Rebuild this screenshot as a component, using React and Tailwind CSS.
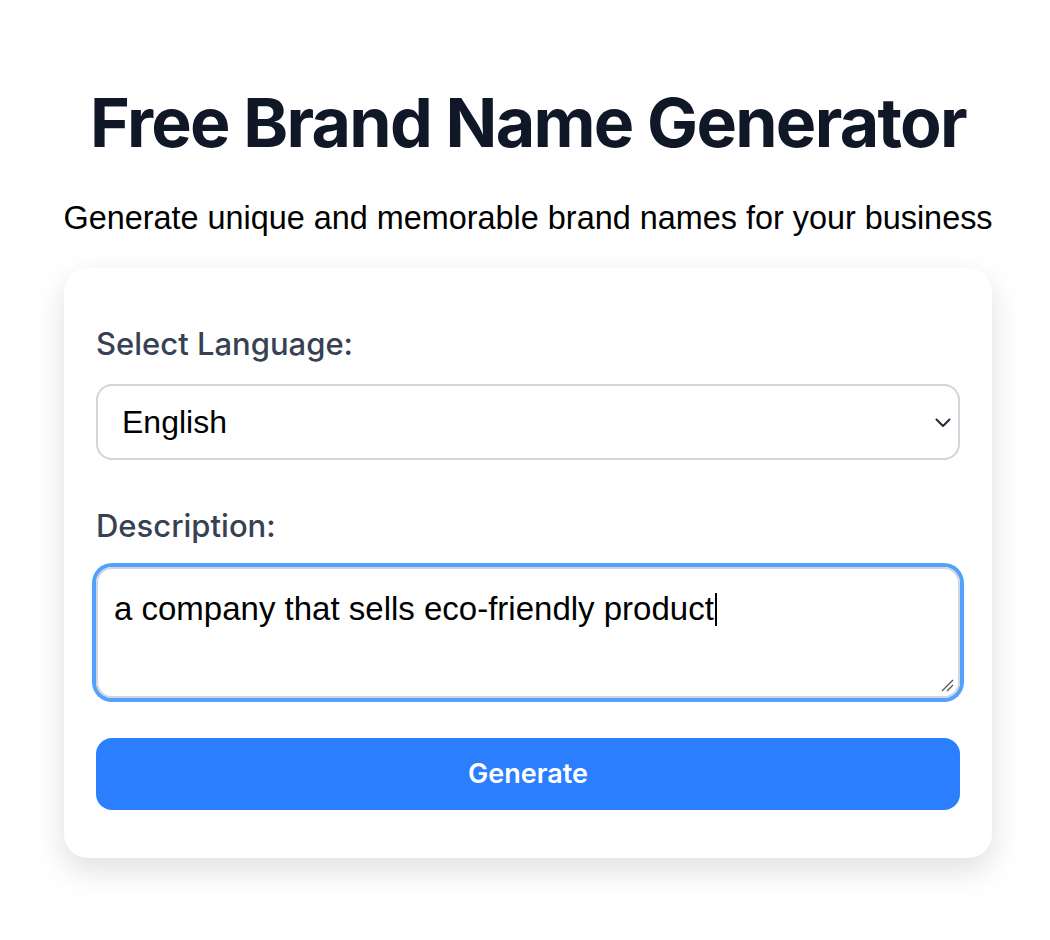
import React, { useState } from "react";

function ChevronDown() {
  return (
    <svg width="16" height="10" viewBox="0 0 16 10" fill="none" className="pointer-events-none">
      <path d="M1.5 1.5 L8 8 L14.5 1.5" stroke="#1f2937" strokeWidth="2" strokeLinecap="round" strokeLinejoin="round" />
    </svg>
  );
}

function ResizeGrip() {
  return (
    <svg width="14" height="14" viewBox="0 0 14 14" fill="none">
      <path d="M13 2 L2 13" stroke="#555" strokeWidth="1.2" />
      <path d="M13 7 L7 13" stroke="#555" strokeWidth="1.2" />
    </svg>
  );
}

export default function App() {
  const [language, setLanguage] = useState("English");
  const description = "a company that sells eco-friendly product";

  return (
    <div className="min-h-screen bg-white font-['Liberation_Sans',Arial,sans-serif]">
      <div className="ml-[64px] w-[928px] pt-[82px]">
        <h1 className="text-center font-['Inter',sans-serif] text-[68px] leading-[80px] font-bold tracking-[-0.025em] text-gray-900">
          Free Brand Name Generator
        </h1>
        <p className="-mx-[20px] mt-[36px] whitespace-nowrap text-center text-[32.4px] leading-[40px] text-black">
          Generate unique and memorable brand names for your business
        </p>

        <div className="mt-[30px] rounded-[24px] bg-white px-[32px] pt-[52px] pb-[48px] shadow-[0_12px_32px_rgba(0,0,0,0.13)]">
          <label className="block font-['Inter',sans-serif] text-[31px] leading-[48px] font-medium text-gray-700">
            Select Language:
          </label>
          <div className="relative mt-[16px]">
            <select
              value={language}
              onChange={(e) => setLanguage(e.target.value)}
              className="h-[76px] w-full appearance-none rounded-[16px] border-2 border-gray-300 bg-white pl-[24px] text-[32px] text-black outline-none"
            >
              <option>English</option>
              <option>Spanish</option>
              <option>French</option>
              <option>German</option>
            </select>
            <div className="absolute right-[9px] top-[34px]">
              <ChevronDown />
            </div>
          </div>

          <label className="mt-[42px] block font-['Inter',sans-serif] text-[31px] leading-[48px] font-medium text-gray-700">
            Description:
          </label>
          <div className="relative mt-[17px] h-[131px] rounded-[16px] border-2 border-gray-300 px-[16px] pt-[20px] text-[33px] leading-[40px] text-black ring-4 ring-blue-400">
            {description}
            <span className="ml-[1px] inline-block h-[33px] w-[2px] align-[-6px] bg-black" />
            <div className="absolute right-[4px] bottom-[4px]">
              <ResizeGrip />
            </div>
          </div>

          <button className="mt-[40px] h-[72px] w-full rounded-[16px] bg-blue-500 font-['Inter',sans-serif] text-[27px] font-semibold text-white">
            Generate
          </button>
        </div>
      </div>
    </div>
  );
}
